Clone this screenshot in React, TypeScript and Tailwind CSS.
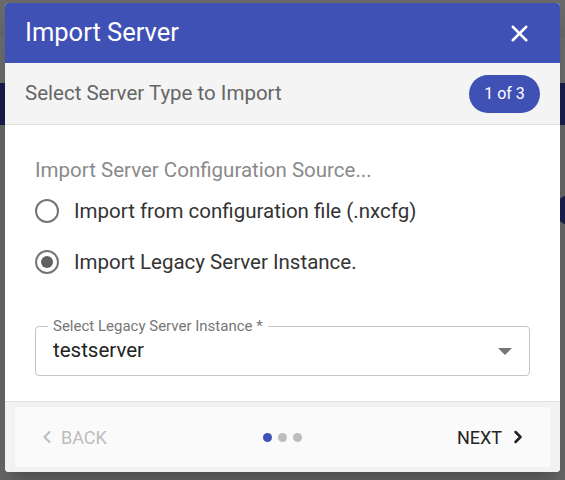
import { X, ChevronLeft, ChevronRight } from "lucide-react";

function Radio({ checked }: { checked?: boolean }) {
  return (
    <span className="w-[24px] h-[24px] rounded-full border-2 border-[#757575] flex items-center justify-center shrink-0">
      {checked && <span className="w-[12px] h-[12px] rounded-full bg-[#616161]" />}
    </span>
  );
}

export default function App() {
  return (
    <div
      className="relative w-[565px] h-[480px] overflow-hidden bg-[#6b6b6b]"
      style={{ fontFamily: "Roboto, 'Liberation Sans', sans-serif" }}
    >
      {/* dimmed page behind the dialog */}
      <div className="absolute left-0 right-0 top-[37px] h-[46px] bg-[#707070]" />
      <div className="absolute left-0 right-0 top-[83px] h-[42px] bg-[#1b1f4d]" />
      <div className="absolute right-[-20px] top-[195px] w-[30px] h-[30px] rounded-full bg-[#1b1f4d]" />

      <div className="relative flex pt-[3px] pl-[5px]">
        <div className="w-[555px] h-[469px] bg-white rounded-[4px] overflow-hidden flex flex-col shadow-[0_11px_15px_-7px_rgba(0,0,0,0.2),0_24px_38px_3px_rgba(0,0,0,0.14)]">
          {/* header */}
          <div className="h-[60px] bg-[#3f51b5] flex items-center justify-between pl-[20px] pr-[27px] shrink-0">
            <h1 className="text-white text-[25.5px] leading-none">Import Server</h1>
            <X size={27} strokeWidth={2.2} className="text-white" />
          </div>

          {/* step title */}
          <div className="h-[62px] bg-[#f4f4f4] border-b border-[#e0e0e0] flex items-center justify-between pl-[20px] pr-[20px] shrink-0">
            <span className="text-[20.5px] text-[#666666]">Select Server Type to Import</span>
            <span className="h-[38px] w-[71px] rounded-full bg-[#3f51b5] text-white text-[16px] flex items-center justify-center">
              1 of 3
            </span>
          </div>

          {/* body */}
          <div className="flex-1 flex flex-col px-[30px] pt-[33px]">
            <div className="text-[20.5px] text-[#8a8a8a] leading-[24px]">Import Server Configuration Source...</div>
            <div className="flex items-center gap-[15px] mt-[17px] h-[24px]">
              <Radio />
              <span className="text-[20.5px] text-[#333333]">Import from configuration file (.nxcfg)</span>
            </div>
            <div className="flex items-center gap-[15px] mt-[27px] h-[24px]">
              <Radio checked />
              <span className="text-[20.5px] text-[#333333]">Import Legacy Server Instance.</span>
            </div>

            <div className="relative mt-[52px] h-[50px] w-[495px] border border-[#c4c4c4] rounded-[4px] flex items-center justify-between pl-[17px] pr-[17px]">
              <span className="absolute left-[12px] top-[-10px] bg-white px-[5px] text-[15px] leading-[18px] text-[#777777]">
                Select Legacy Server Instance *
              </span>
              <span className="text-[20.5px] text-[#222222] mt-[-1px]">testserver</span>
              <span className="w-0 h-0 border-l-[7px] border-r-[7px] border-t-[7px] border-l-transparent border-r-transparent border-t-[#757575]" />
            </div>
          </div>

          {/* footer */}
          <div className="h-[71px] bg-[#f2f2f2] border-t border-[#e0e0e0] pt-[5px] pb-[5px] px-[10px] shrink-0">
            <div className="h-full bg-[#fafafa] flex items-center justify-between pl-[22px] pr-[22px]">
              <div className="flex items-center gap-[4px] text-[#bdbdbd] text-[18px] w-[90px]">
                <ChevronLeft size={20} strokeWidth={2.5} />
                <span>BACK</span>
              </div>
              <div className="flex items-center gap-[6px]">
                <span className="w-[9px] h-[9px] rounded-full bg-[#3f51b5]" />
                <span className="w-[9px] h-[9px] rounded-full bg-[#bdbdbd]" />
                <span className="w-[9px] h-[9px] rounded-full bg-[#bdbdbd]" />
              </div>
              <div className="flex items-center justify-end gap-[6px] text-[#222222] text-[18px] w-[90px]">
                <span>NEXT</span>
                <ChevronRight size={20} strokeWidth={3} />
              </div>
            </div>
          </div>
        </div>
      </div>
    </div>
  );
}
